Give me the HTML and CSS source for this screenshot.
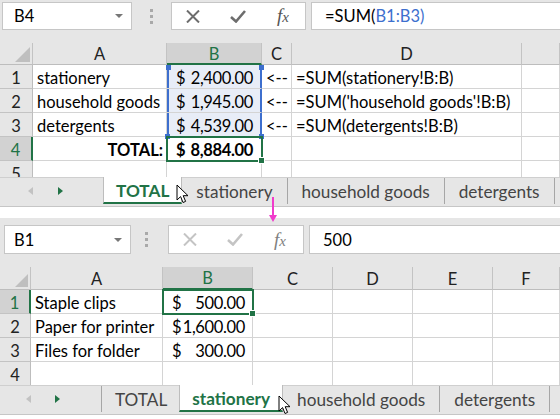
FILE: index.html
```html
<!DOCTYPE html>
<html lang="en">
<head>
    <meta charset="UTF-8">
    <meta name="viewport" content="width=device-width, initial-scale=1.0">
    <title>SUM across sheets</title>
    <link rel="stylesheet" href="styles.css">
</head>
<body>
    <div class="page">
        <!-- Sheet: TOTAL -->
        <div class="shot top">
            <div class="toolbar">
                <div class="namebox"><span>B4</span><span class="caret"></span></div>
                <div class="grip"><i></i><i></i><i></i></div>
                <div class="fxbox">
                    <svg class="icon" width="14" height="13" viewBox="0 0 14 13"><path d="M1 0.5 L13 12.5 M13 0.5 L1 12.5" /></svg>
                    <svg class="icon" width="16" height="13" viewBox="0 0 16 13"><path d="M1 7 L6 11.5 L15 1" /></svg>
                    <span class="fx">f<span>x</span></span>
                </div>
                <div class="formula">=SUM(<span class="ref-text">B1:B3)</span></div>
            </div>

            <div class="grid">
                <div class="corner"><i></i></div>
                <div class="hd">A</div>
                <div class="hd sel">B</div>
                <div class="hd">C</div>
                <div class="hd">D</div>
                <div class="hd"></div>

                <div class="rh">1</div>
                <div class="cell">stationery</div>
                <div class="cell acct ref ref-first"><span>$</span><span>2,400.00</span></div>
                <div class="cell">&lt;--</div>
                <div class="cell">=SUM(stationery!B:B)</div>
                <div class="cell"></div>

                <div class="rh">2</div>
                <div class="cell">household goods</div>
                <div class="cell acct ref"><span>$</span><span>1,945.00</span></div>
                <div class="cell">&lt;--</div>
                <div class="cell">=SUM('household goods'!B:B)</div>
                <div class="cell"></div>

                <div class="rh">3</div>
                <div class="cell">detergents</div>
                <div class="cell acct ref ref-last"><span>$</span><span>4,539.00</span></div>
                <div class="cell">&lt;--</div>
                <div class="cell">=SUM(detergents!B:B)</div>
                <div class="cell"></div>

                <div class="rh sel">4</div>
                <div class="cell right bold">TOTAL:</div>
                <div class="cell acct bold active"><span>$</span><span>8,884.00</span></div>
                <div class="cell"></div>
                <div class="cell"></div>
                <div class="cell"></div>

                <div class="rh">5</div>
                <div class="cell"></div>
                <div class="cell"></div>
                <div class="cell"></div>
                <div class="cell"></div>
                <div class="cell"></div>
            </div>

            <div class="tabs">
                <div class="nav"><i class="prev"></i><i class="next"></i></div>
                <div class="tab current">TOTAL</div>
                <div class="tab">stationery</div>
                <div class="tab">household goods</div>
                <div class="tab">detergents</div>
            </div>
        </div>

        <div class="gap"></div>

        <!-- Sheet: stationery -->
        <div class="shot bottom">
            <div class="toolbar">
                <div class="namebox"><span>B1</span><span class="caret"></span></div>
                <div class="grip"><i></i><i></i><i></i></div>
                <div class="fxbox off">
                    <svg class="icon" width="14" height="13" viewBox="0 0 14 13"><path d="M1 0.5 L13 12.5 M13 0.5 L1 12.5" /></svg>
                    <svg class="icon" width="16" height="13" viewBox="0 0 16 13"><path d="M1 7 L6 11.5 L15 1" /></svg>
                    <span class="fx">f<span>x</span></span>
                </div>
                <div class="formula">500</div>
            </div>

            <div class="grid">
                <div class="corner"><i></i></div>
                <div class="hd">A</div>
                <div class="hd sel">B</div>
                <div class="hd">C</div>
                <div class="hd">D</div>
                <div class="hd">E</div>
                <div class="hd">F</div>

                <div class="rh sel">1</div>
                <div class="cell">Staple clips</div>
                <div class="cell acct active"><span>$</span><span>500.00</span></div>
                <div class="cell"></div>
                <div class="cell"></div>
                <div class="cell"></div>
                <div class="cell"></div>

                <div class="rh">2</div>
                <div class="cell">Paper for printer</div>
                <div class="cell acct"><span>$</span><span>1,600.00</span></div>
                <div class="cell"></div>
                <div class="cell"></div>
                <div class="cell"></div>
                <div class="cell"></div>

                <div class="rh">3</div>
                <div class="cell">Files for folder</div>
                <div class="cell acct"><span>$</span><span>300.00</span></div>
                <div class="cell"></div>
                <div class="cell"></div>
                <div class="cell"></div>
                <div class="cell"></div>

                <div class="rh">4</div>
                <div class="cell"></div>
                <div class="cell"></div>
                <div class="cell"></div>
                <div class="cell"></div>
                <div class="cell"></div>
                <div class="cell"></div>
            </div>

            <div class="tabs">
                <div class="nav sep"><i class="prev"></i><i class="next"></i></div>
                <div class="tab no-sep">TOTAL</div>
                <div class="tab current">stationery</div>
                <div class="tab">household goods</div>
                <div class="tab">detergents</div>
            </div>
        </div>

        <!-- overlays: pointer arrow between shots and mouse cursors -->
        <svg class="down-arrow" width="10" height="26" viewBox="0 0 10 26">
            <path d="M5 0 V20" stroke="#f03ccb" stroke-width="2" />
            <path d="M1 18 L5 25 L9 18 Z" fill="#f03ccb" />
        </svg>
        <svg class="cursor c1" width="13" height="20" viewBox="0 0 13 20"><path d="M1 1 V16 L4.6 12.6 L7 18.5 L9.6 17.4 L7.2 11.7 H12 Z" /></svg>
        <svg class="cursor c2" width="13" height="20" viewBox="0 0 13 20"><path d="M1 1 V16 L4.6 12.6 L7 18.5 L9.6 17.4 L7.2 11.7 H12 Z" /></svg>
    </div>
</body>
</html>
```

FILE: styles.css
```css
body {
    margin: 0;
    background: #fff;
    font-family: 'Lato', 'Liberation Sans', sans-serif;
    font-size: 16.5px;
    color: #000;
}

.page {
    position: relative;
    width: 560px;
    height: 419px;
    overflow: hidden;
}

.shot {
    background: #e6e6e6;
}

.gap {
    height: 11px;
    background: #fff;
}

/* Formula bar */
.toolbar {
    display: flex;
    align-items: flex-start;
    box-sizing: border-box;
    height: 43px;
    padding: 2px 0 0 2px;
}

.bottom .toolbar {
    height: 49px;
    padding: 7px 0 0 4px;
}

.namebox,
.fxbox,
.formula {
    display: flex;
    align-items: center;
    box-sizing: border-box;
    height: 28px;
    background: #fff;
    border: 1px solid #c6c6c6;
}

.bottom .namebox,
.bottom .fxbox,
.bottom .formula {
    height: 29px;
}

.namebox {
    justify-content: space-between;
    width: 130px;
    padding: 0 8px 0 11px;
}

.bottom .namebox {
    width: 127px;
    padding-left: 9px;
}

.caret {
    width: 0;
    height: 0;
    border-left: 4px solid transparent;
    border-right: 4px solid transparent;
    border-top: 4px solid #777;
}

.grip {
    display: flex;
    flex-direction: column;
    align-items: center;
    justify-content: center;
    gap: 3px;
    width: 39px;
    height: 28px;
}

.bottom .grip {
    width: 37px;
    margin-left: -3px;
    margin-right: 3px;
}

.grip i {
    width: 3px;
    height: 3px;
    background: #a9a9a9;
}

.fxbox {
    gap: 30px;
    width: 135px;
    padding-left: 14px;
    margin-right: 5px;
}

.bottom .fxbox {
    width: 136px;
}

.icon path {
    fill: none;
    stroke: #6d6d6d;
    stroke-width: 2;
}

.fxbox .icon + .icon path {
    stroke-width: 2.6;
}

.off .icon path {
    stroke: #c4c4c4;
}

.fx {
    font-family: 'Liberation Serif', serif;
    font-style: italic;
    font-size: 19px;
    color: #555;
    margin-left: 1px;
}

.fx span {
    font-size: 15px;
}

.off .fx {
    color: #808080;
}

.formula {
    flex: 1;
    border-right: none;
    padding-left: 13px;
}

.ref-text {
    color: #3d6fce;
}

/* Worksheet grid */
.grid {
    display: grid;
    overflow: hidden;
    background: #fff;
}

.top .grid {
    grid-template-columns: 33px 134px 95px 30px 230px 38px;
    grid-template-rows: 22px;
    grid-auto-rows: 24px;
    height: 134px;
}

.bottom .grid {
    grid-template-columns: 31px 132px 90px 80px 80px 80px 67px;
    grid-template-rows: 23px;
    grid-auto-rows: 24px;
    height: 118px;
}

.cell,
.hd,
.rh,
.corner {
    display: flex;
    align-items: center;
    box-sizing: border-box;
    min-width: 0;
    white-space: nowrap;
    overflow: hidden;
    border-right: 1px solid #d4d4d4;
    border-bottom: 1px solid #d4d4d4;
}

.cell {
    padding: 2px 3px 0 4px;
}

.hd,
.rh,
.corner {
    justify-content: center;
    background: #e6e6e6;
    color: #222;
    border-color: #c3c3c3;
}

.hd {
    padding-top: 1px;
    border-bottom-color: #bdbdbd;
}

.rh {
    padding-top: 2px;
    border-right-color: #bdbdbd;
}

.corner {
    justify-content: flex-end;
    align-items: flex-end;
    padding: 0 2px 2px 0;
    border-bottom-color: #bdbdbd;
}

.corner i {
    width: 0;
    height: 0;
    border-left: 15px solid transparent;
    border-bottom: 15px solid #bfbfbf;
}

.bottom .corner i {
    border-left-width: 13px;
    border-bottom-width: 13px;
}

.hd.sel,
.rh.sel {
    background: #d2d2d2;
    color: #217346;
}

.hd.sel {
    border-bottom: 2px solid #217346;
}

.rh.sel {
    border-right: 2px solid #217346;
}

.right {
    justify-content: flex-end;
}

.bold {
    font-weight: bold;
}

.acct {
    justify-content: space-between;
    padding: 2px 8px 0 9px;
}

.acct span + span {
    letter-spacing: -0.35px;
}

.bottom .acct {
    padding-right: 7px;
}

/* copy/reference range and active cell */
.ref {
    position: relative;
    overflow: visible;
    background: #e8edf7;
    border-right-color: #3d6fce;
    box-shadow: inset 2px 0 0 #3d6fce, inset -1px 0 0 #3d6fce;
}

.ref-first::before,
.ref-first::after,
.ref-last::before,
.ref-last::after {
    content: "";
    position: absolute;
    width: 5px;
    height: 5px;
    background: #3d6fce;
}

.ref-first::before { left: -1px; top: 0; }
.ref-first::after { right: -3px; top: 0; }
.ref-last::before { left: -2px; bottom: -3px; }
.ref-last::after { right: -3px; bottom: -3px; }

.active {
    position: relative;
    z-index: 1;
    overflow: visible;
    outline: 2px solid #217346;
    outline-offset: -1px;
}

.active::after {
    content: "";
    position: absolute;
    right: -4px;
    bottom: -4px;
    width: 5px;
    height: 5px;
    background: #217346;
    border: 1px solid #fff;
}

/* Sheet tabs */
.tabs {
    display: flex;
    align-items: flex-start;
    box-sizing: border-box;
    height: 30px;
    border-top: 1px solid #cfcfcf;
    border-bottom: 1px solid #c6c6c6;
    color: #444;
    font-size: 17.2px;
}

.nav {
    display: flex;
    align-items: center;
    gap: 25px;
    box-sizing: border-box;
    width: 103px;
    height: 26px;
    padding-left: 28px;
}

.nav.sep {
    width: 102px;
    gap: 24px;
    padding-left: 26px;
    border-right: 1px solid #a6a6a6;
}

.nav i {
    width: 0;
    height: 0;
    border-top: 4.5px solid transparent;
    border-bottom: 4.5px solid transparent;
}

.nav .prev {
    border-right: 5px solid #c2c2c2;
}

.nav .next {
    border-left: 5px solid #217346;
}

.tab {
    display: flex;
    align-items: center;
    box-sizing: border-box;
    height: 26px;
    padding: 1px 14px 0;
    border-right: 1px solid #a6a6a6;
}

.tab.no-sep {
    padding: 1px 11px 0 13px;
    border-right-color: transparent;
}

.tab.current {
    height: 27px;
    margin-top: -1px;
    padding: 1px 12px 0;
    background: #fff;
    color: #217346;
    font-weight: bold;
    border-left: 1px solid #bdbdbd;
    border-right: 1px solid #bdbdbd;
    border-bottom: 2px solid #217346;
}

/* Overlays */
.down-arrow {
    position: absolute;
    left: 268px;
    top: 197px;
}

.cursor {
    position: absolute;
}

.cursor path {
    fill: #fff;
    stroke: #000;
    stroke-width: 1;
}

.c1 {
    left: 176px;
    top: 184px;
}

.c2 {
    left: 278px;
    top: 395px;
}
```
